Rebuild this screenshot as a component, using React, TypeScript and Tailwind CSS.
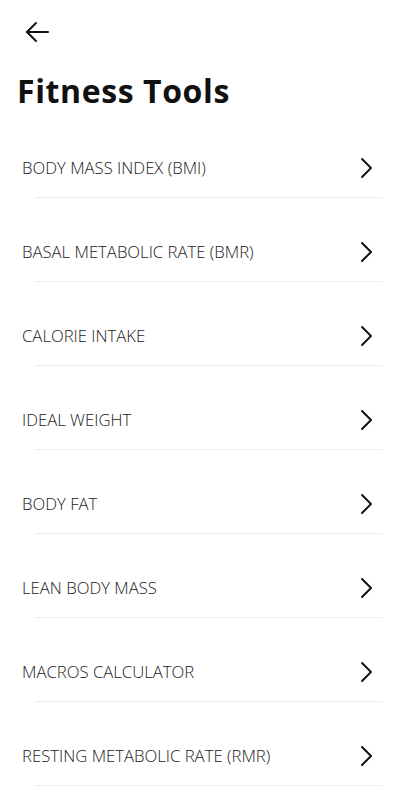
import * as React from 'react';

const tools = [
  'BODY MASS INDEX (BMI)',
  'BASAL METABOLIC RATE (BMR)',
  'CALORIE INTAKE',
  'IDEAL WEIGHT',
  'BODY FAT',
  'LEAN BODY MASS',
  'MACROS CALCULATOR',
  'RESTING METABOLIC RATE (RMR)',
];

function BackArrow() {
  return (
    <svg width="24" height="22" viewBox="0 0 24 22" fill="none" stroke="#111" strokeWidth="2" strokeLinecap="round" strokeLinejoin="round">
      <path d="M23 11H2" />
      <path d="M11 2 2 11l9 9" />
    </svg>
  );
}

function Chevron() {
  return (
    <svg width="14" height="22" viewBox="0 0 14 22" fill="none" stroke="#111" strokeWidth="2" strokeLinecap="round" strokeLinejoin="round">
      <path d="M3 2l9 9-9 9" />
    </svg>
  );
}

export default function App() {
  return (
    <div className="min-h-[800px] w-[400px] bg-white font-['Open_Sans',sans-serif] text-[#111]">
      <header className="flex h-[64px] items-center pl-[25px]">
        <button type="button" className="flex items-center">
          <BackArrow />
        </button>
      </header>
      <div className="h-[50px] pl-[17px] pt-[5px]">
        <h1 className="text-[32px] font-bold leading-[44px] tracking-[0.6px]">Fitness Tools</h1>
      </div>
      <ul>
        {tools.map((t) => (
          <li key={t}>
            <div className="flex items-center justify-between pb-[18px] pl-[22px] pr-[27px] pt-[43px]">
              <span className="text-[16.7px] font-light leading-[22px] text-[#1a1a1a]">{t}</span>
              <Chevron />
            </div>
            <div className="ml-[35px] mr-[18px] h-px bg-[#ececec]" />
          </li>
        ))}
      </ul>
    </div>
  );
}
